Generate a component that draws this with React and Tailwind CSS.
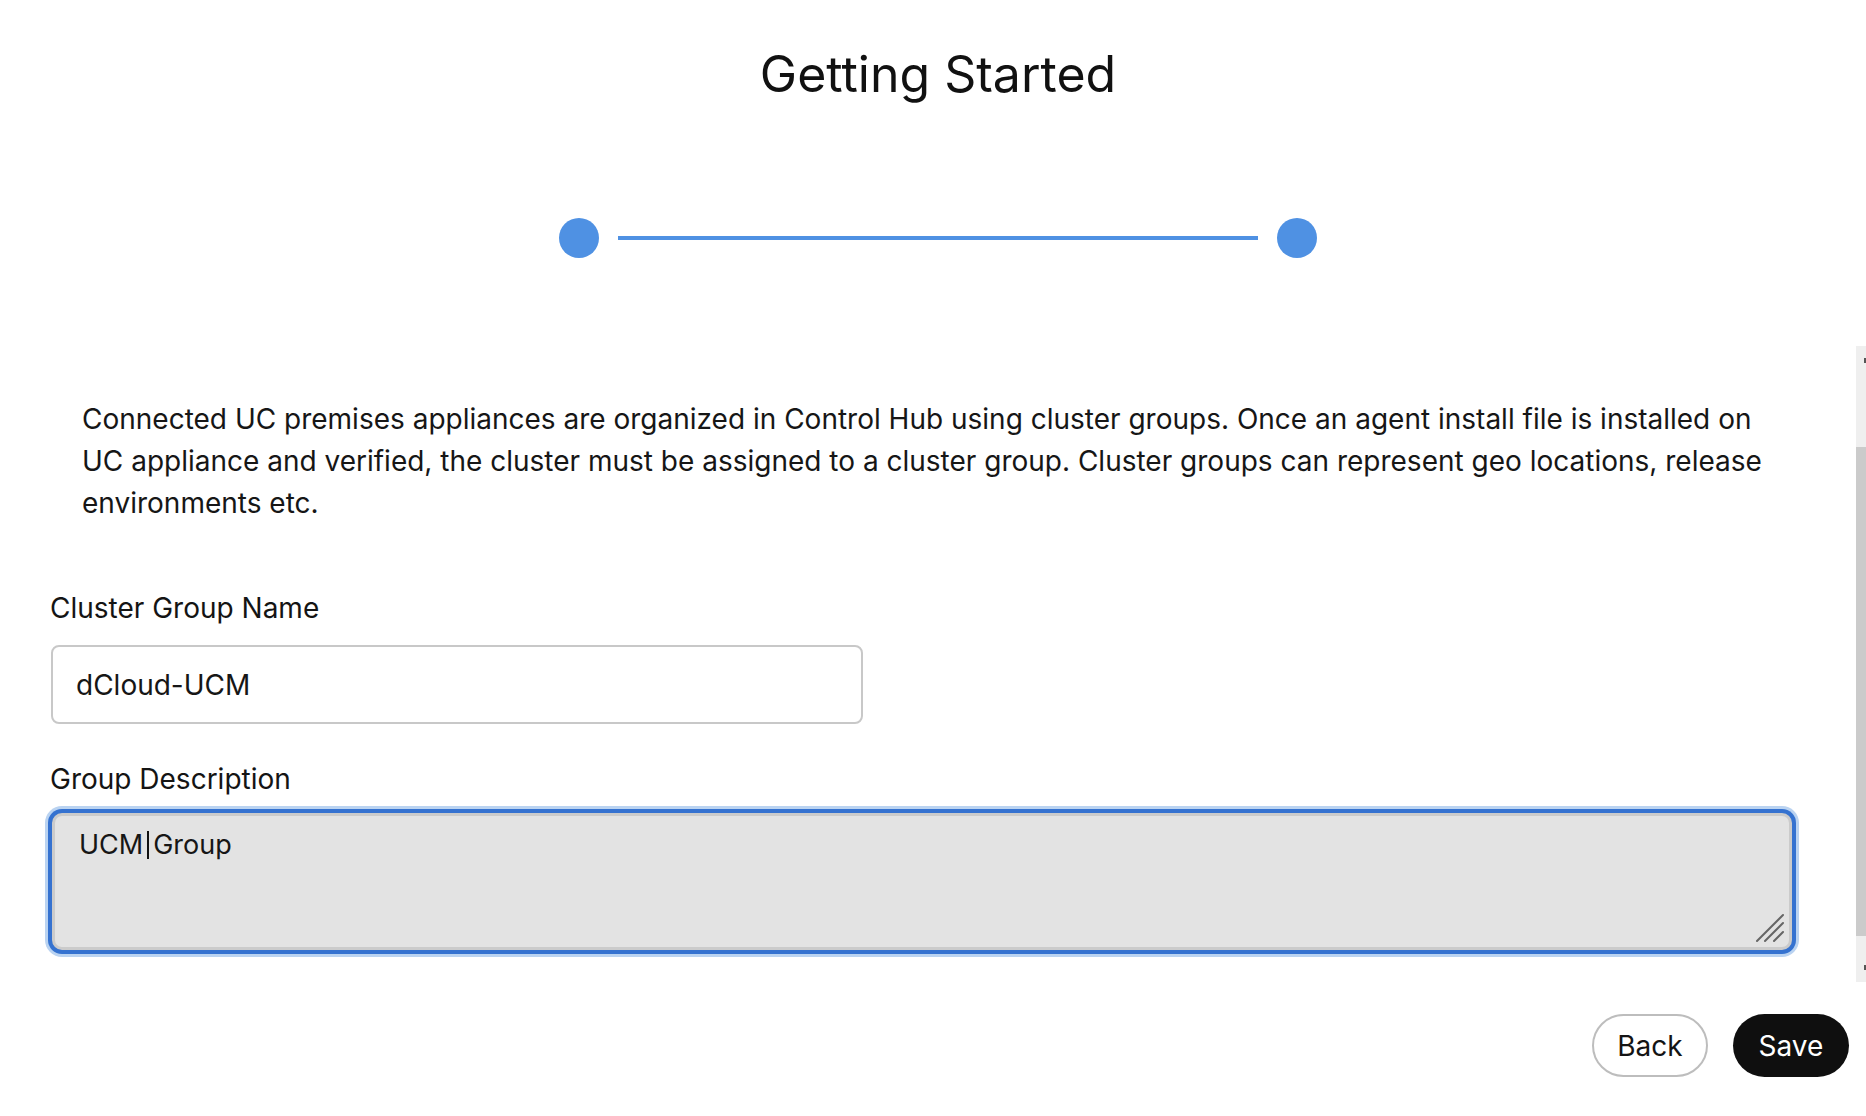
import React from 'react';

const Label = ({ children, className = '' }) => (
  <div className={`text-[28px] leading-[39px] text-[#141414] ${className}`}>{children}</div>
);

export default function App() {
  return (
    <div className="relative w-full h-[1116px] bg-white overflow-hidden font-['Inter','Noto_Sans',sans-serif] text-[#141414]">
      {/* Header */}
      <div className="pl-[10px] pt-[45px] flex justify-center">
        <h1 className="text-[50px] leading-[59px] font-normal text-[#111]">Getting Started</h1>
      </div>

      {/* Stepper */}
      <div className="pl-[10px] mt-[114px] flex items-center justify-center gap-[19px]">
        <div className="w-[40px] h-[40px] rounded-full bg-[#4f91e3]" />
        <div className="w-[640px] h-[4px] bg-[#4f91e3]" />
        <div className="w-[40px] h-[40px] rounded-full bg-[#4f91e3]" />
      </div>

      {/* Body */}
      <div className="pl-[50px] pt-[140px]">
        <p className="ml-[32px] w-[1700px] text-[28px] leading-[42px] text-[#161616]">
          Connected UC premises appliances are organized in Control Hub using cluster groups. Once an agent install file is installed on UC appliance and verified, the cluster must be assigned to a cluster group. Cluster groups can represent geo locations, release environments etc.
        </p>

        <Label className="mt-[65px]">Cluster Group Name</Label>
        <div className="mt-[17px] ml-[1px] w-[812px] h-[79px] border-2 border-[#c8c8c8] rounded-[8px] flex items-center pl-[23px] text-[28px] text-[#161616]">
          dCloud-UCM
        </div>

        <Label className="mt-[36px]">Group Description</Label>
        <div className="mt-[14px] ml-[2px] relative w-[1740px] h-[137px] bg-[#e3e3e3] border-[3px] border-[#cbcbcb] rounded-[10px] shadow-[0_0_0_4px_#3572d0,0_0_0_7px_#bad3f1] pl-[24px] pt-[9px]">
          <div className="flex items-center text-[27px] leading-[39px] text-[#161616]">
            <span>UCM</span>
            <span className="w-[2px] h-[28px] bg-[#111] mx-[4px]" />
            <span>Group</span>
          </div>
          <svg className="absolute right-[4px] bottom-[4px]" width="30" height="30" viewBox="0 0 30 30">
            <path d="M2 28 L28 2 M10 28 L28 10 M19 28 L28 19" stroke="#666" strokeWidth="2" strokeLinecap="round" />
          </svg>
        </div>
      </div>

      {/* Actions */}
      <div className="flex justify-end gap-[25px] pr-[17px] mt-[64px]">
        <button className="w-[116px] h-[63px] rounded-full border-2 border-[#bdbdbd] bg-white text-[28px] text-[#141414]">
          Back
        </button>
        <button className="w-[116px] h-[63px] rounded-full bg-[#0f0f0f] text-[28px] text-white">
          Save
        </button>
      </div>

      {/* Scrollbar of the form panel */}
      <div className="absolute right-0 top-[346px] w-[10px] h-[636px] bg-[#efefef]">
        <div className="absolute right-0 top-[12px] w-[2px] h-[5px] bg-[#555]" />
        <div className="absolute left-0 right-0 top-[101px] h-[489px] bg-[#cbcbcb]" />
        <div className="absolute right-0 bottom-[12px] w-[2px] h-[5px] bg-[#555]" />
      </div>
    </div>
  );
}
